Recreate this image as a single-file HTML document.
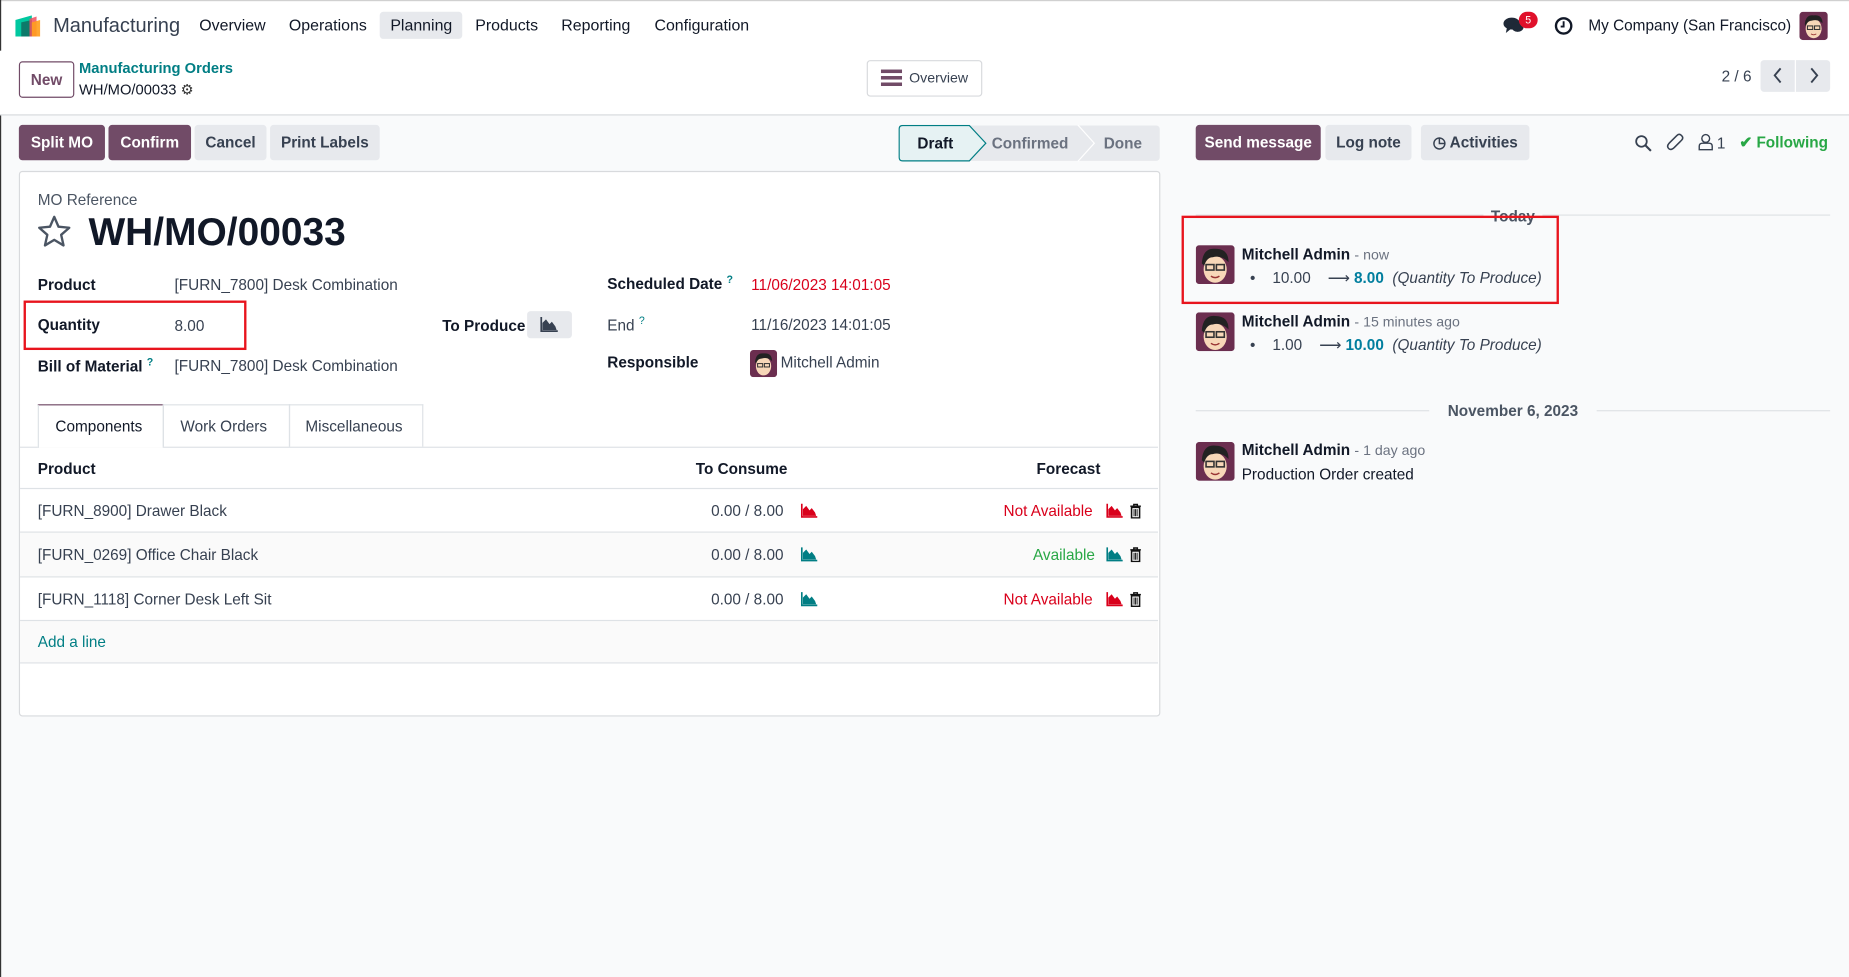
<!DOCTYPE html>
<html><head><meta charset="utf-8">
<style>
html,body{margin:0;padding:0;width:1849px;height:977px;overflow:hidden;background:#f9fafb}
#r{position:absolute;left:0;top:0;width:1568px;height:829px;transform:scale(1.17921,1.17853);transform-origin:0 0;font-family:"Liberation Sans",sans-serif;font-size:13px;color:#374151;background:#f9fafb}
.a{position:absolute;white-space:nowrap}
.btn{position:absolute;height:30px;line-height:30px;text-align:center;border-radius:3px;font-weight:bold;font-size:13px}
.p{background:#714b67;color:#fff}
.g{background:#e7e9ed;color:#374151}
.b{font-weight:bold;color:#111827}
.hl{position:absolute;height:1px;background:#dee2e6}
.red{color:#d9001b}
.teal{color:#017e84}
.av{position:absolute}
</style></head><body>
<div id="r">
<div class="a" style="left:0;top:0;width:1568px;height:43px;background:#fff;border-top:1px solid #d0d0d0"></div>
<div class="a" style="left:0;top:0;width:1px;height:829px;background:#333"></div>
<svg class="a" style="left:13px;top:13px" width="25" height="18" viewBox="0 0 25 18"><path d="M0 4 L14 0 V18 H0Z" fill="#00c8a0"/><path d="M5 6 L14 4 V18 H5Z" fill="#0d7a6a"/><path d="M12 3 L18 1 V18 H12Z" fill="#f05060" opacity=".85"/><path d="M14 6 L21 4 V18 H14Z" fill="#ff9f1c" opacity=".9"/></svg>
<div class="a" style="left:45px;top:12px;font-size:17px;color:#374151">Manufacturing</div>
<div class="a" style="left:322px;top:10px;width:70px;height:23px;background:#e7e9ed;border-radius:3px"></div>
<div class="a" style="left:169px;top:14px;font-size:13.5px;color:#111827">Overview</div>
<div class="a" style="left:245px;top:14px;font-size:13.5px;color:#111827">Operations</div>
<div class="a" style="left:331px;top:14px;font-size:13.5px;color:#111827">Planning</div>
<div class="a" style="left:403px;top:14px;font-size:13.5px;color:#111827">Products</div>
<div class="a" style="left:476px;top:14px;font-size:13.5px;color:#111827">Reporting</div>
<div class="a" style="left:555px;top:14px;font-size:13.5px;color:#111827">Configuration</div>
<svg class="a" style="left:1275px;top:14px" width="18" height="16" viewBox="0 0 18 16"><ellipse cx="7" cy="6" rx="7" ry="5" fill="#1f2937"/><path d="M3 9 L2 14 L7 10Z" fill="#1f2937"/><ellipse cx="12" cy="9" rx="5" ry="4" fill="#1f2937"/></svg>
<div class="a" style="left:1288px;top:10px;width:16px;height:14px;border-radius:8px;background:#e0112b;color:#fff;font-size:9px;text-align:center;line-height:14px">5</div>
<svg class="a" style="left:1318px;top:14px" width="16" height="16" viewBox="0 0 16 16"><circle cx="8" cy="8" r="6.5" fill="none" stroke="#111827" stroke-width="2"/><path d="M8 4 V8.5 H5.5" fill="none" stroke="#111827" stroke-width="1.6"/></svg>
<div class="a" style="left:1347px;top:14px;font-size:13px;color:#111827">My Company (San Francisco)</div>
<svg class="av" style="left:1526px;top:10px" width="24" height="24" viewBox="0 0 32 32"><rect width="32" height="32" rx="4" fill="#6b2e4f"/><ellipse cx="16" cy="19" rx="9" ry="11" fill="#f7d7b8"/><path d="M6 14 Q7 3 16 4 Q26 3 26 13 Q21 8 14 10 Q9 10 7 16Z" fill="#222"/><rect x="9" y="16" width="6" height="4" fill="none" stroke="#333" stroke-width="1.2"/><rect x="17" y="16" width="6" height="4" fill="none" stroke="#333" stroke-width="1.2"/><path d="M13 25 Q16 27 19 25" stroke="#933" fill="none"/></svg>

<div class="a" style="left:0;top:43px;width:1568px;height:54px;background:#fff;border-bottom:1px solid #d8dadd"></div>
<div class="a" style="left:16px;top:52px;width:45px;height:29px;border:1px solid #714b67;border-radius:3px;line-height:29px;text-align:center;font-weight:bold;color:#714b67">New</div>
<div class="a teal" style="left:67px;top:51px;font-weight:bold;font-size:12.5px">Manufacturing Orders</div>
<div class="a" style="left:67px;top:68px;font-size:12.5px;color:#111827">WH/MO/00033 <span style="color:#333">⚙</span></div>
<div class="a" style="left:735px;top:51px;width:96px;height:29px;border:1px solid #d8dadd;border-radius:3px;background:#fff"></div>
<svg class="a" style="left:747px;top:59px" width="18" height="14" viewBox="0 0 18 14"><rect y="0" width="18" height="3" fill="#714b67"/><rect y="5.5" width="18" height="3" fill="#714b67"/><rect y="11" width="18" height="3" fill="#714b67"/></svg>
<div class="a" style="left:771px;top:59px;font-size:12px;color:#374151">Overview</div>
<div class="a" style="left:1460px;top:57px;font-size:13px;color:#374151">2 / 6</div>
<div class="a" style="left:1493px;top:51px;width:29px;height:27px;background:#e7e9ed;border-radius:3px 0 0 3px"></div>
<div class="a" style="left:1523px;top:51px;width:29px;height:27px;background:#e7e9ed;border-radius:0 3px 3px 0"></div>
<svg class="a" style="left:1502px;top:57px" width="12" height="14"><path d="M8 1 L3 7 L8 13" fill="none" stroke="#374151" stroke-width="1.6"/></svg>
<svg class="a" style="left:1532px;top:57px" width="12" height="14"><path d="M4 1 L9 7 L4 13" fill="none" stroke="#374151" stroke-width="1.6"/></svg>

<div class="btn p" style="left:16px;top:106px;width:73px">Split MO</div>
<div class="btn p" style="left:92px;top:106px;width:70px">Confirm</div>
<div class="btn g" style="left:165px;top:106px;width:61px">Cancel</div>
<div class="btn g" style="left:229px;top:106px;width:93px">Print Labels</div>
<svg class="a" style="left:762px;top:106px" width="222" height="31" viewBox="0 0 222 31"><rect x="0.5" y="0.5" width="221" height="30" rx="3" fill="#e7e9ed"/><path d="M0.5 3.5 Q0.5 0.5 3.5 0.5 H60 L74 15.5 L60 30.5 H3.5 Q0.5 30.5 0.5 27.5Z" fill="#e6f2f3" stroke="#017e84"/><path d="M152 0 L166 15.5 L152 31" fill="none" stroke="#fff" stroke-width="1"/></svg>
<div class="a b" style="left:778px;top:114px">Draft</div>
<div class="a" style="left:841px;top:114px;font-weight:bold;color:#6b7280">Confirmed</div>
<div class="a" style="left:936px;top:114px;font-weight:bold;color:#6b7280">Done</div>

<div class="btn p" style="left:1014px;top:106px;width:106px">Send message</div>
<div class="btn g" style="left:1124px;top:106px;width:73px">Log note</div>
<div class="btn g" style="left:1205px;top:106px;width:92px">◷ Activities</div>
<svg class="a" style="left:1386px;top:114px" width="15" height="15"><circle cx="6" cy="6" r="4.5" fill="none" stroke="#374151" stroke-width="1.5"/><path d="M9.5 9.5 L14 14" stroke="#374151" stroke-width="1.8"/></svg>
<svg class="a" style="left:1413px;top:113px" width="16" height="16" viewBox="0 0 16 16"><path d="M12 7 L7 12 Q4 15 2 13 Q0 11 3 8 L9 2 Q11 0 13 2 Q15 4 13 6 L7 12" fill="none" stroke="#374151" stroke-width="1.3"/></svg>
<svg class="a" style="left:1440px;top:113px" width="13" height="15"><circle cx="6.5" cy="4.5" r="3.3" fill="none" stroke="#374151" stroke-width="1.2"/><path d="M1 14 V11 Q1 8.5 4 8.5 H9 Q12 8.5 12 11 V14Z" fill="none" stroke="#374151" stroke-width="1.2"/></svg>
<div class="a" style="left:1456px;top:114px;color:#374151">1</div>
<div class="a" style="left:1475px;top:113px;font-weight:bold;color:#28a745">✔ Following</div>

<div class="a" style="left:16px;top:145px;width:966px;height:461px;background:#fff;border:1px solid #d8dadd;border-radius:3px"></div>
<div class="a" style="left:32px;top:162px;color:#4b5563">MO Reference</div>
<svg class="a" style="left:31px;top:182px" width="30" height="29" viewBox="0 0 24 23"><path d="M12 1.5 L14.9 8.2 L22.2 8.9 L16.7 13.7 L18.3 20.9 L12 17.1 L5.7 20.9 L7.3 13.7 L1.8 8.9 L9.1 8.2Z" fill="none" stroke="#4b5563" stroke-width="1.6" stroke-linejoin="round"/></svg>
<div class="a" style="left:75px;top:178px;font-size:33px;font-weight:bold;color:#111827">WH/MO/00033</div>

<div class="a b" style="left:32px;top:234px">Product</div>
<div class="a" style="left:148px;top:234px">[FURN_7800] Desk Combination</div>
<div class="a" style="left:20px;top:255px;width:185px;height:38px;border:2px solid #e8141d"></div>
<div class="a b" style="left:32px;top:268px">Quantity</div>
<div class="a" style="left:148px;top:269px">8.00</div>
<div class="a b" style="left:375px;top:269px">To Produce</div>
<div class="a" style="left:447px;top:264px;width:38px;height:23px;background:#e7e9ed;border-radius:3px"></div>
<svg class="a" style="left:458px;top:269px" width="16" height="13"><path d="M1 0 V12 H15" fill="none" stroke="#374151" stroke-width="1.5"/><path d="M2 11 L2 5 L5 2 L8 6 L10 4 L13 8 L14 11Z" fill="#374151"/></svg>
<div class="a b" style="left:32px;top:302px">Bill of Material <sup style="color:#017e84;font-size:9px">?</sup></div>
<div class="a" style="left:148px;top:303px">[FURN_7800] Desk Combination</div>

<div class="a b" style="left:515px;top:232px">Scheduled Date <sup style="color:#017e84;font-size:9px">?</sup></div>
<div class="a red" style="left:637px;top:234px">11/06/2023 14:01:05</div>
<div class="a" style="left:515px;top:267px;color:#374151">End <sup style="color:#017e84;font-size:9px">?</sup></div>
<div class="a" style="left:637px;top:268px">11/16/2023 14:01:05</div>
<div class="a b" style="left:515px;top:300px">Responsible</div>
<svg class="av" style="left:636px;top:297px" width="23" height="23" viewBox="0 0 32 32"><rect width="32" height="32" rx="4" fill="#6b2e4f"/><ellipse cx="16" cy="19" rx="9" ry="11" fill="#f7d7b8"/><path d="M6 14 Q7 3 16 4 Q26 3 26 13 Q21 8 14 10 Q9 10 7 16Z" fill="#222"/><rect x="9" y="16" width="6" height="4" fill="none" stroke="#333" stroke-width="1.2"/><rect x="17" y="16" width="6" height="4" fill="none" stroke="#333" stroke-width="1.2"/></svg>
<div class="a" style="left:662px;top:300px">Mitchell Admin</div>

<div class="hl" style="left:17px;top:379px;width:965px"></div>
<div class="a" style="left:32px;top:343px;width:105px;height:36px;background:#fff;border:1px solid #dee2e6;border-top:1px solid #714b67;border-bottom:none"></div>
<div class="a" style="left:138px;top:343px;width:106px;height:35px;border:1px solid #dee2e6;border-bottom:none"></div>
<div class="a" style="left:245px;top:343px;width:112px;height:35px;border:1px solid #dee2e6;border-bottom:none"></div>
<div class="a" style="left:47px;top:354px;color:#111827">Components</div>
<div class="a" style="left:153px;top:354px">Work Orders</div>
<div class="a" style="left:259px;top:354px">Miscellaneous</div>

<div class="a b" style="left:32px;top:390px">Product</div>
<div class="a b" style="left:590px;top:390px">To Consume</div>
<div class="a b" style="left:879px;top:390px">Forecast</div>
<div class="hl" style="left:17px;top:414px;width:965px"></div>
<div class="a" style="left:17px;top:452px;width:965px;height:37px;background:#fafafa"></div>
<div class="hl" style="left:17px;top:451px;width:965px"></div>
<div class="hl" style="left:17px;top:489px;width:965px"></div>
<div class="a" style="left:17px;top:527px;width:965px;height:35px;background:#fafafa"></div>
<div class="hl" style="left:17px;top:526px;width:965px"></div>
<div class="hl" style="left:17px;top:562px;width:965px"></div>

<div class="a" style="left:32px;top:426px">[FURN_8900] Drawer Black</div>
<div class="a" style="left:603px;top:426px">0.00 / 8.00</div>
<div class="a red" style="left:851px;top:426px">Not Available</div>
<div class="a" style="left:32px;top:463px">[FURN_0269] Office Chair Black</div>
<div class="a" style="left:603px;top:463px">0.00 / 8.00</div>
<div class="a" style="left:876px;top:463px;color:#28a745">Available</div>
<div class="a" style="left:32px;top:501px">[FURN_1118] Corner Desk Left Sit</div>
<div class="a" style="left:603px;top:501px">0.00 / 8.00</div>
<div class="a red" style="left:851px;top:501px">Not Available</div>

<svg width="0" height="0" style="position:absolute"><defs>
<symbol id="ch" viewBox="0 0 16 13"><path d="M1 0 V12 H15" fill="none" stroke="currentColor" stroke-width="1.5"/><path d="M2 11 L2 5 L5 2 L8 6 L10 4 L13 8 L14 11Z" fill="currentColor"/></symbol>
<symbol id="tr" viewBox="0 0 10 13"><path d="M0.5 2.5 H9.5 M3.5 2.5 V1 H6.5 V2.5" stroke="#111" fill="none" stroke-width="1.2"/><rect x="1.6" y="3.5" width="6.8" height="9" fill="none" stroke="#111" stroke-width="1.3"/><path d="M3.7 5 V11 M5 5 V11 M6.3 5 V11" stroke="#111" stroke-width=".8"/></symbol>
</defs></svg>
<svg class="a" style="left:679px;top:427px;color:#d9001b" width="15" height="13"><use href="#ch"/></svg>
<svg class="a" style="left:679px;top:464px;color:#017e84" width="15" height="13"><use href="#ch"/></svg>
<svg class="a" style="left:679px;top:502px;color:#017e84" width="15" height="13"><use href="#ch"/></svg>
<svg class="a" style="left:938px;top:427px;color:#d9001b" width="15" height="13"><use href="#ch"/></svg>
<svg class="a" style="left:938px;top:464px;color:#017e84" width="15" height="13"><use href="#ch"/></svg>
<svg class="a" style="left:938px;top:502px;color:#d9001b" width="15" height="13"><use href="#ch"/></svg>
<svg class="a" style="left:958px;top:427px" width="10" height="13"><use href="#tr"/></svg>
<svg class="a" style="left:958px;top:464px" width="10" height="13"><use href="#tr"/></svg>
<svg class="a" style="left:958px;top:502px" width="10" height="13"><use href="#tr"/></svg>
<div class="a teal" style="left:32px;top:537px">Add a line</div>

<div class="hl" style="left:1014px;top:182px;width:538px"></div>
<div class="a" style="left:1258px;top:176px;width:50px;background:#f9fafb;text-align:center;font-weight:bold;color:#4b5563">Today</div>
<div class="a" style="left:1002px;top:183px;width:316px;height:71px;border:2px solid #e8141d"></div>

<svg width="0" height="0" style="position:absolute"><defs><symbol id="avt" viewBox="0 0 32 32"><rect width="32" height="32" rx="3" fill="#6b2e4f"/><ellipse cx="16" cy="20" rx="9.5" ry="11" fill="#f7d7b8"/><path d="M5 15 Q6 2 16 3 Q27 3 27 14 Q21 8 14 10 Q9 10 7 17Z" fill="#222"/><rect x="8.5" y="16" width="6.5" height="4.5" fill="none" stroke="#333" stroke-width="1.3"/><rect x="17" y="16" width="6.5" height="4.5" fill="none" stroke="#333" stroke-width="1.3"/><path d="M12.5 25.5 Q16 28 19.5 25.5" stroke="#933" stroke-width="1.2" fill="none"/></symbol></defs></svg>
<svg class="av" style="left:1014px;top:208px" width="33" height="33"><use href="#avt"/></svg>
<div class="a" style="left:1053px;top:208px"><b style="color:#111827">Mitchell Admin</b> <span style="color:#6b7280;font-size:12px">- now</span></div>
<div class="a" style="left:1060px;top:228px;color:#374151">•&nbsp;&nbsp;&nbsp;&nbsp;10.00&nbsp;&nbsp;&nbsp;&nbsp;⟶ <b style="color:#017e9e">8.00</b>&nbsp;&nbsp;<i>(Quantity To Produce)</i></div>

<svg class="av" style="left:1014px;top:265px" width="33" height="33"><use href="#avt"/></svg>
<div class="a" style="left:1053px;top:265px"><b style="color:#111827">Mitchell Admin</b> <span style="color:#6b7280;font-size:12px">- 15 minutes ago</span></div>
<div class="a" style="left:1060px;top:285px;color:#374151">•&nbsp;&nbsp;&nbsp;&nbsp;1.00&nbsp;&nbsp;&nbsp;&nbsp;⟶ <b style="color:#017e9e">10.00</b>&nbsp;&nbsp;<i>(Quantity To Produce)</i></div>

<div class="hl" style="left:1014px;top:348px;width:538px"></div>
<div class="a" style="left:1212px;top:341px;width:142px;background:#f9fafb;text-align:center;font-weight:bold;color:#4b5563">November 6, 2023</div>

<svg class="av" style="left:1014px;top:375px" width="33" height="33"><use href="#avt"/></svg>
<div class="a" style="left:1053px;top:374px"><b style="color:#111827">Mitchell Admin</b> <span style="color:#6b7280;font-size:12px">- 1 day ago</span></div>
<div class="a" style="left:1053px;top:395px;color:#111827">Production Order created</div>
</div>
</body></html>
